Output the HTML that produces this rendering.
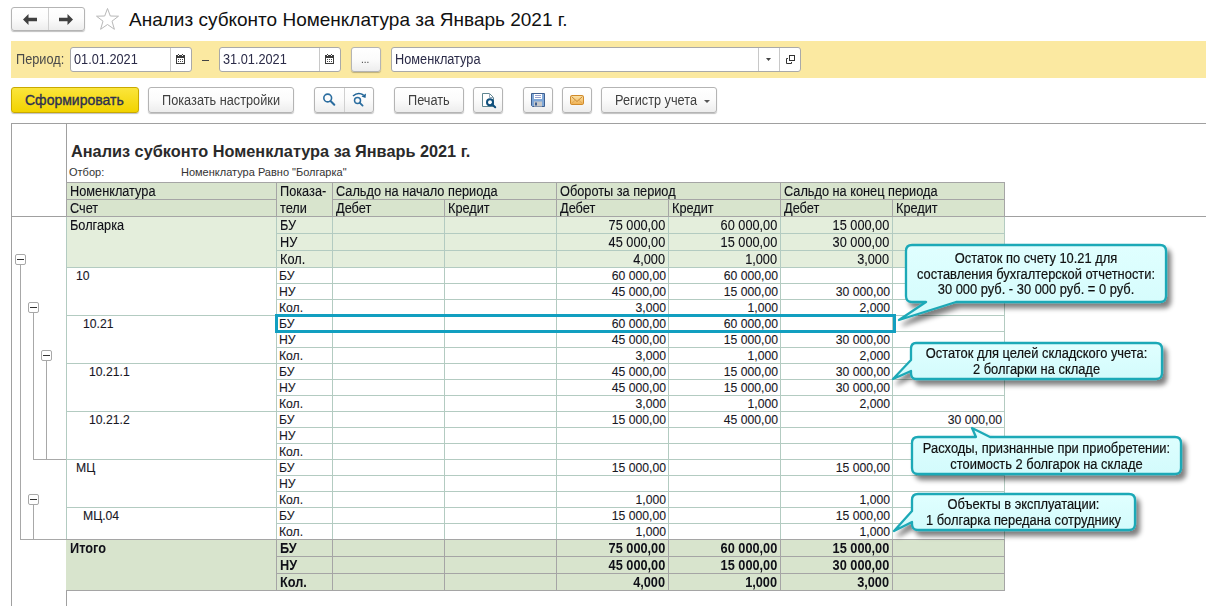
<!DOCTYPE html>
<html><head><meta charset="utf-8">
<style>
html,body{margin:0;padding:0;background:#fff;width:1206px;height:606px;overflow:hidden;position:relative;font-family:"Liberation Sans",sans-serif;}
.bx{position:absolute;}
.t{position:absolute;font-size:14px;line-height:14px;color:#101018;white-space:nowrap;-webkit-text-stroke:0.12px #101018;transform:scaleX(0.91);transform-origin:0 0;}
.tr{position:absolute;font-size:14px;line-height:14px;color:#101018;white-space:nowrap;-webkit-text-stroke:0.12px #101018;transform:scaleX(0.91);transform-origin:100% 0;}
.ts{position:absolute;font-size:12.2px;line-height:14px;color:#18181f;white-space:nowrap;-webkit-text-stroke:0.1px #18181f;}
.tsr{position:absolute;font-size:12.2px;line-height:14px;color:#18181f;white-space:nowrap;-webkit-text-stroke:0.1px #18181f;}
.tb{position:absolute;font-size:14px;line-height:14px;color:#101018;white-space:nowrap;font-weight:bold;transform:scaleX(0.91);transform-origin:0 0;}
.tbr{position:absolute;font-size:14px;line-height:14px;color:#101018;white-space:nowrap;font-weight:bold;transform:scaleX(0.91);transform-origin:100% 0;}
.btn{position:absolute;box-sizing:border-box;border:1px solid #b4b4b4;border-radius:3px;background:linear-gradient(#ffffff,#fbfbfb 50%,#ededed);box-shadow:0 1px 1px rgba(0,0,0,0.25);}
.lbl{position:absolute;font-size:14px;color:#404040;white-space:nowrap;line-height:14px;transform:scaleX(0.91);transform-origin:0 0;}
.inp{position:absolute;box-sizing:border-box;border:1px solid #a9a9a9;border-radius:3px;background:#fff;}
.tree{position:absolute;background:#a8a8a8;}
.tbx{position:absolute;box-sizing:border-box;width:11px;height:11px;border:1px solid #a8a8a8;border-radius:2px;background:#fff;}
.tbx:after{content:"";position:absolute;left:1px;top:4px;width:7px;height:1px;background:#333;}
.co{position:absolute;}
.cot{position:absolute;font-size:14px;line-height:15.6px;color:#111;-webkit-text-stroke:0.2px #111;text-align:center;white-space:nowrap;transform:scaleX(0.92);transform-origin:50% 0;}
</style></head><body>
<!-- nav buttons -->
<div class="btn" style="left:11px;top:7px;width:74px;height:24px;"></div>
<div class="bx" style="left:48px;top:8px;width:1px;height:22px;background:#d0d0d0"></div>
<svg class="bx" style="left:22px;top:13px" width="16" height="13" viewBox="0 0 16 13"><path d="M1 6.5 L6.5 1 V4.8 H15 V8.2 H6.5 V12 Z" fill="#404040"/></svg>
<svg class="bx" style="left:58px;top:13px" width="16" height="13" viewBox="0 0 16 13"><path d="M15 6.5 L9.5 1 V4.8 H1 V8.2 H9.5 V12 Z" fill="#404040"/></svg>
<svg class="bx" style="left:95px;top:7px" width="25" height="24" viewBox="0 0 25 24"><path d="M12.5 1.5 L15.3 9 L23.5 9.2 L17 14.2 L19.4 22.3 L12.5 17.5 L5.6 22.3 L8 14.2 L1.5 9.2 L9.7 9 Z" fill="none" stroke="#b8b8b8" stroke-width="1"/></svg>
<div class="bx" style="left:129px;top:9px;font-size:19px;line-height:22px;color:#111;white-space:nowrap">Анализ субконто Номенклатура за Январь 2021 г.</div>

<!-- yellow band -->
<div class="bx" style="left:11px;top:41px;width:1195px;height:37px;background:#fbe9a1"></div>
<div class="lbl" style="left:16px;top:52px;color:#4a4a4a">Период:</div>
<div class="inp" style="left:70px;top:47px;width:122px;height:25px;"></div>
<div class="bx" style="left:170px;top:48px;width:1px;height:23px;background:#c8c8c8"></div>
<div class="lbl" style="left:74px;top:52px;color:#2b2b48">01.01.2021</div>
<div class="inp" style="left:219px;top:47px;width:122px;height:25px;"></div>
<div class="bx" style="left:319px;top:48px;width:1px;height:23px;background:#c8c8c8"></div>
<div class="lbl" style="left:223px;top:52px;color:#2b2b48">31.01.2021</div>
<div class="bx" style="left:202px;top:60px;width:7px;height:1px;background:#444"></div>
<div class="btn" style="left:351px;top:47px;width:30px;height:25px;"></div>
<div class="lbl" style="left:361px;top:52px;font-size:11px">...</div>
<div class="inp" style="left:391px;top:47px;width:410px;height:25px;"></div>
<div class="bx" style="left:758px;top:48px;width:1px;height:23px;background:#c8c8c8"></div>
<div class="bx" style="left:779px;top:48px;width:1px;height:23px;background:#c8c8c8"></div>
<div class="lbl" style="left:395px;top:52px;color:#2b2b48">Номенклатура</div>



<svg class="bx" style="left:176px;top:54px" width="10" height="11" viewBox="0 0 10 11" shape-rendering="crispEdges"><g fill="#3c3c3c"><rect x="0" y="1" width="9" height="3"/><rect x="0" y="4" width="1" height="6"/><rect x="8" y="4" width="1" height="6"/><rect x="1" y="9" width="7" height="1"/><rect x="2" y="0" width="1" height="1"/><rect x="6" y="0" width="1" height="1"/></g><g fill="#fff"><rect x="2" y="1" width="1" height="1"/><rect x="6" y="1" width="1" height="1"/></g><g fill="#4a4a4a"><rect x="2" y="5" width="1" height="1"/><rect x="4" y="5" width="1" height="1"/><rect x="6" y="5" width="1" height="1"/><rect x="2" y="7" width="1" height="1"/><rect x="4" y="7" width="1" height="1"/><rect x="6" y="7" width="1" height="1"/></g></svg>
<svg class="bx" style="left:325px;top:54px" width="10" height="11" viewBox="0 0 10 11" shape-rendering="crispEdges"><g fill="#3c3c3c"><rect x="0" y="1" width="9" height="3"/><rect x="0" y="4" width="1" height="6"/><rect x="8" y="4" width="1" height="6"/><rect x="1" y="9" width="7" height="1"/><rect x="2" y="0" width="1" height="1"/><rect x="6" y="0" width="1" height="1"/></g><g fill="#fff"><rect x="2" y="1" width="1" height="1"/><rect x="6" y="1" width="1" height="1"/></g><g fill="#4a4a4a"><rect x="2" y="5" width="1" height="1"/><rect x="4" y="5" width="1" height="1"/><rect x="6" y="5" width="1" height="1"/><rect x="2" y="7" width="1" height="1"/><rect x="4" y="7" width="1" height="1"/><rect x="6" y="7" width="1" height="1"/></g></svg>
<svg class="bx" style="left:765px;top:57px" width="7" height="5" viewBox="0 0 7 5"><path d="M1 1 H6 L3.5 4 Z" fill="#444"/></svg>
<svg class="bx" style="left:785px;top:54px" width="12" height="11" viewBox="0 0 12 11"><rect x="4.5" y="1.5" width="5" height="5" fill="none" stroke="#333" stroke-width="1"/><path d="M3 4.5 H1.5 V9.5 H6.5 V8" fill="none" stroke="#333" stroke-width="1"/></svg>

<!-- toolbar -->
<div class="bx" style="left:11px;top:87px;width:128px;height:26px;box-sizing:border-box;border:1px solid #c9a900;border-radius:3px;background:linear-gradient(#fbe53c,#f2d300);box-shadow:0 1px 1px rgba(0,0,0,0.25)"></div>
<div class="lbl" style="left:25px;top:93px;color:#2d3050;-webkit-text-stroke:0.35px #2d3050;transform:none">Сформировать</div>
<div class="btn" style="left:148px;top:87px;width:146px;height:26px;"></div>
<div class="lbl" style="left:162px;top:93px;color:#404040">Показать настройки</div>
<div class="btn" style="left:314px;top:87px;width:60px;height:26px;"></div>
<div class="bx" style="left:344px;top:88px;width:1px;height:24px;background:#d0d0d0"></div>
<div class="btn" style="left:394px;top:87px;width:70px;height:26px;"></div>
<div class="lbl" style="left:408px;top:93px;color:#404040">Печать</div>
<div class="btn" style="left:473px;top:87px;width:30px;height:26px;"></div>
<div class="btn" style="left:523px;top:87px;width:30px;height:26px;"></div>
<div class="btn" style="left:562px;top:87px;width:30px;height:26px;"></div>
<div class="btn" style="left:601px;top:87px;width:116px;height:26px;"></div>
<div class="lbl" style="left:615px;top:93px;color:#404040">Регистр учета</div>



<svg class="bx" style="left:320px;top:91px" width="18" height="18" viewBox="0 0 18 18"><circle cx="7.7" cy="7" r="3.9" fill="none" stroke="#2b6d9f" stroke-width="1.6"/><path d="M10.5 10 L14.3 13.8" stroke="#2b6d9f" stroke-width="2" stroke-linecap="round"/></svg>
<svg class="bx" style="left:350px;top:91px" width="18" height="18" viewBox="0 0 18 18"><path d="M3 5 Q8 0.5 13.5 4" fill="none" stroke="#1f6396" stroke-width="1.6"/><path d="M11.5 5.5 L16 2.5 L15.5 7 Z" fill="#1f6396"/><circle cx="7.5" cy="9.5" r="3" fill="none" stroke="#2b6d9f" stroke-width="1.5"/><path d="M9.8 11.8 L12.6 14.6" stroke="#2b6d9f" stroke-width="1.8" stroke-linecap="round"/></svg>
<svg class="bx" style="left:480px;top:92px" width="18" height="17" viewBox="0 0 18 17"><path d="M2.5 1.5 H9.5 L13.5 5.5 V14.5 H2.5 Z" fill="#fff" stroke="#5f8590" stroke-width="1"/><path d="M9.5 1.5 V5.5 H13.5" fill="none" stroke="#9ab" stroke-width="1"/><circle cx="10" cy="10.2" r="3" fill="none" stroke="#0f4f7c" stroke-width="2"/><path d="M12 12.2 L15.2 15.2" stroke="#0f4f7c" stroke-width="2" stroke-linecap="round"/></svg>
<svg class="bx" style="left:531px;top:93px" width="14" height="14" viewBox="0 0 14 14"><path d="M0.5 0.5 H13.5 V13.5 H1.5 L0.5 12.5 Z" fill="#80a8d8" stroke="#3e5f90" stroke-width="1"/><rect x="3" y="1" width="8" height="5" fill="#fff"/><path d="M4 2.5 H10 M4 4.5 H10" stroke="#7a88c0" stroke-width="0.8"/><rect x="3" y="8.5" width="8" height="5" fill="#c8c8c8"/><rect x="4" y="9.5" width="2" height="3" fill="#3e5f90"/></svg>
<svg class="bx" style="left:570px;top:95px" width="14" height="10" viewBox="0 0 14 10"><defs><linearGradient id="mg" x1="0" y1="0" x2="0" y2="1"><stop offset="0" stop-color="#fbe2a8"/><stop offset="1" stop-color="#f0b050"/></linearGradient></defs><rect x="0.5" y="0.5" width="13" height="9" rx="1.2" fill="url(#mg)" stroke="#d08a2a" stroke-width="1"/><path d="M1.5 1.5 L7 6.5 L12.5 1.5" fill="none" stroke="#c98a34" stroke-width="1"/><path d="M1.5 8.5 L5.5 5 M12.5 8.5 L8.5 5" fill="none" stroke="#d9a050" stroke-width="0.8"/></svg>
<svg class="bx" style="left:703px;top:99px" width="8" height="5" viewBox="0 0 8 5"><path d="M1 1 H7 L4 4 Z" fill="#555"/></svg>

<!-- report frame -->
<div class="bx" style="left:11px;top:123px;width:1195px;height:1px;background:#a0a0a0"></div>
<div class="bx" style="left:11px;top:123px;width:1px;height:483px;background:#a0a0a0"></div>
<div class="bx" style="left:66px;top:123px;width:1px;height:483px;background:#a0a0a0"></div>
<div class="bx" style="left:11px;top:216px;width:1195px;height:1px;background:#a0a0a0"></div>

<div class="bx" style="left:71px;top:142px;font-size:16.3px;line-height:18px;font-weight:bold;color:#2a2a2a;white-space:nowrap">Анализ субконто Номенклатура за Январь 2021 г.</div>
<div class="bx" style="left:69px;top:166px;font-size:11px;line-height:12px;color:#333;white-space:nowrap">Отбор:</div>
<div class="bx" style="left:181px;top:166px;font-size:11px;line-height:12px;color:#333;white-space:nowrap">Номенклатура Равно "Болгарка"</div>

<div class="bx" style="left:66px;top:216px;width:938px;height:51px;background:#e4eedc"></div>
<div class="bx" style="left:66px;top:539px;width:938px;height:51px;background:#d8e4cd"></div>
<div class="bx" style="left:66px;top:182px;width:938px;height:34px;background:#d8e4cd"></div>
<div class="bx" style="left:276px;top:233px;width:729px;height:1px;background:#b3cbc1"></div>
<div class="bx" style="left:276px;top:250px;width:729px;height:1px;background:#b3cbc1"></div>
<div class="bx" style="left:66px;top:267px;width:939px;height:1px;background:#b3cbc1"></div>
<div class="bx" style="left:276px;top:283px;width:729px;height:1px;background:#b3cbc1"></div>
<div class="bx" style="left:276px;top:299px;width:729px;height:1px;background:#b3cbc1"></div>
<div class="bx" style="left:66px;top:315px;width:939px;height:1px;background:#b3cbc1"></div>
<div class="bx" style="left:276px;top:331px;width:729px;height:1px;background:#b3cbc1"></div>
<div class="bx" style="left:276px;top:347px;width:729px;height:1px;background:#b3cbc1"></div>
<div class="bx" style="left:66px;top:363px;width:939px;height:1px;background:#b3cbc1"></div>
<div class="bx" style="left:276px;top:379px;width:729px;height:1px;background:#b3cbc1"></div>
<div class="bx" style="left:276px;top:395px;width:729px;height:1px;background:#b3cbc1"></div>
<div class="bx" style="left:66px;top:411px;width:939px;height:1px;background:#b3cbc1"></div>
<div class="bx" style="left:276px;top:427px;width:729px;height:1px;background:#b3cbc1"></div>
<div class="bx" style="left:276px;top:443px;width:729px;height:1px;background:#b3cbc1"></div>
<div class="bx" style="left:66px;top:459px;width:939px;height:1px;background:#b3cbc1"></div>
<div class="bx" style="left:276px;top:475px;width:729px;height:1px;background:#b3cbc1"></div>
<div class="bx" style="left:276px;top:491px;width:729px;height:1px;background:#b3cbc1"></div>
<div class="bx" style="left:66px;top:507px;width:939px;height:1px;background:#b3cbc1"></div>
<div class="bx" style="left:276px;top:523px;width:729px;height:1px;background:#b3cbc1"></div>
<div class="bx" style="left:276px;top:216px;width:1px;height:324px;background:#b3cbc1"></div>
<div class="bx" style="left:332px;top:216px;width:1px;height:324px;background:#b3cbc1"></div>
<div class="bx" style="left:444px;top:216px;width:1px;height:324px;background:#b3cbc1"></div>
<div class="bx" style="left:556px;top:216px;width:1px;height:324px;background:#b3cbc1"></div>
<div class="bx" style="left:668px;top:216px;width:1px;height:324px;background:#b3cbc1"></div>
<div class="bx" style="left:780px;top:216px;width:1px;height:324px;background:#b3cbc1"></div>
<div class="bx" style="left:892px;top:216px;width:1px;height:324px;background:#b3cbc1"></div>
<div class="bx" style="left:1004px;top:216px;width:1px;height:324px;background:#b3cbc1"></div>
<div class="bx" style="left:66px;top:216px;width:1px;height:324px;background:#b3cbc1"></div>
<div class="bx" style="left:66px;top:539px;width:939px;height:1px;background:#a5a5a5"></div>
<div class="bx" style="left:276px;top:556px;width:729px;height:1px;background:#a5a5a5"></div>
<div class="bx" style="left:276px;top:573px;width:729px;height:1px;background:#a5a5a5"></div>
<div class="bx" style="left:66px;top:590px;width:939px;height:1px;background:#a5a5a5"></div>
<div class="bx" style="left:276px;top:539px;width:1px;height:52px;background:#a5a5a5"></div>
<div class="bx" style="left:332px;top:539px;width:1px;height:52px;background:#a5a5a5"></div>
<div class="bx" style="left:444px;top:539px;width:1px;height:52px;background:#a5a5a5"></div>
<div class="bx" style="left:556px;top:539px;width:1px;height:52px;background:#a5a5a5"></div>
<div class="bx" style="left:668px;top:539px;width:1px;height:52px;background:#a5a5a5"></div>
<div class="bx" style="left:780px;top:539px;width:1px;height:52px;background:#a5a5a5"></div>
<div class="bx" style="left:892px;top:539px;width:1px;height:52px;background:#a5a5a5"></div>
<div class="bx" style="left:1004px;top:539px;width:1px;height:52px;background:#a5a5a5"></div>
<div class="bx" style="left:66px;top:182px;width:939px;height:1px;background:#a5a5a5"></div>
<div class="bx" style="left:66px;top:216px;width:939px;height:1px;background:#a5a5a5"></div>
<div class="bx" style="left:66px;top:182px;width:1px;height:35px;background:#a5a5a5"></div>
<div class="bx" style="left:66px;top:199px;width:211px;height:1px;background:#a5a5a5"></div>
<div class="bx" style="left:332px;top:199px;width:673px;height:1px;background:#a5a5a5"></div>
<div class="bx" style="left:276px;top:182px;width:1px;height:35px;background:#a5a5a5"></div>
<div class="bx" style="left:332px;top:182px;width:1px;height:35px;background:#a5a5a5"></div>
<div class="bx" style="left:556px;top:182px;width:1px;height:35px;background:#a5a5a5"></div>
<div class="bx" style="left:780px;top:182px;width:1px;height:35px;background:#a5a5a5"></div>
<div class="bx" style="left:1004px;top:182px;width:1px;height:35px;background:#a5a5a5"></div>
<div class="bx" style="left:444px;top:199px;width:1px;height:18px;background:#a5a5a5"></div>
<div class="bx" style="left:668px;top:199px;width:1px;height:18px;background:#a5a5a5"></div>
<div class="bx" style="left:892px;top:199px;width:1px;height:18px;background:#a5a5a5"></div>
<div class="t" style="left:70px;top:184px;">Номенклатура</div>
<div class="t" style="left:70px;top:201px;">Счет</div>
<div class="t" style="left:280px;top:184px;">Показа-</div>
<div class="t" style="left:280px;top:201px;">тели</div>
<div class="t" style="left:336px;top:184px;">Сальдо на начало периода</div>
<div class="t" style="left:560px;top:184px;">Обороты за период</div>
<div class="t" style="left:784px;top:184px;">Сальдо на конец периода</div>
<div class="t" style="left:336px;top:201px;">Дебет</div>
<div class="t" style="left:448px;top:201px;">Кредит</div>
<div class="t" style="left:560px;top:201px;">Дебет</div>
<div class="t" style="left:672px;top:201px;">Кредит</div>
<div class="t" style="left:784px;top:201px;">Дебет</div>
<div class="t" style="left:896px;top:201px;">Кредит</div>
<div class="t" style="left:70px;top:218px;">Болгарка</div>
<div class="t" style="left:280px;top:218px;">БУ</div>
<div class="tr" style="right:541px;top:218px;">75 000,00</div>
<div class="tr" style="right:429px;top:218px;">60 000,00</div>
<div class="tr" style="right:317px;top:218px;">15 000,00</div>
<div class="t" style="left:280px;top:235px;">НУ</div>
<div class="tr" style="right:541px;top:235px;">45 000,00</div>
<div class="tr" style="right:429px;top:235px;">15 000,00</div>
<div class="tr" style="right:317px;top:235px;">30 000,00</div>
<div class="t" style="left:280px;top:252px;">Кол.</div>
<div class="tr" style="right:541px;top:252px;">4,000</div>
<div class="tr" style="right:429px;top:252px;">1,000</div>
<div class="tr" style="right:317px;top:252px;">3,000</div>
<div class="ts" style="left:76px;top:269px;">10</div>
<div class="ts" style="left:279px;top:269px;">БУ</div>
<div class="tsr" style="right:540px;top:269px;">60 000,00</div>
<div class="tsr" style="right:428px;top:269px;">60 000,00</div>
<div class="ts" style="left:279px;top:285px;">НУ</div>
<div class="tsr" style="right:540px;top:285px;">45 000,00</div>
<div class="tsr" style="right:428px;top:285px;">15 000,00</div>
<div class="tsr" style="right:316px;top:285px;">30 000,00</div>
<div class="ts" style="left:279px;top:301px;">Кол.</div>
<div class="tsr" style="right:540px;top:301px;">3,000</div>
<div class="tsr" style="right:428px;top:301px;">1,000</div>
<div class="tsr" style="right:316px;top:301px;">2,000</div>
<div class="ts" style="left:83px;top:317px;">10.21</div>
<div class="ts" style="left:279px;top:317px;">БУ</div>
<div class="tsr" style="right:540px;top:317px;">60 000,00</div>
<div class="tsr" style="right:428px;top:317px;">60 000,00</div>
<div class="ts" style="left:279px;top:333px;">НУ</div>
<div class="tsr" style="right:540px;top:333px;">45 000,00</div>
<div class="tsr" style="right:428px;top:333px;">15 000,00</div>
<div class="tsr" style="right:316px;top:333px;">30 000,00</div>
<div class="ts" style="left:279px;top:349px;">Кол.</div>
<div class="tsr" style="right:540px;top:349px;">3,000</div>
<div class="tsr" style="right:428px;top:349px;">1,000</div>
<div class="tsr" style="right:316px;top:349px;">2,000</div>
<div class="ts" style="left:89px;top:365px;">10.21.1</div>
<div class="ts" style="left:279px;top:365px;">БУ</div>
<div class="tsr" style="right:540px;top:365px;">45 000,00</div>
<div class="tsr" style="right:428px;top:365px;">15 000,00</div>
<div class="tsr" style="right:316px;top:365px;">30 000,00</div>
<div class="ts" style="left:279px;top:381px;">НУ</div>
<div class="tsr" style="right:540px;top:381px;">45 000,00</div>
<div class="tsr" style="right:428px;top:381px;">15 000,00</div>
<div class="tsr" style="right:316px;top:381px;">30 000,00</div>
<div class="ts" style="left:279px;top:397px;">Кол.</div>
<div class="tsr" style="right:540px;top:397px;">3,000</div>
<div class="tsr" style="right:428px;top:397px;">1,000</div>
<div class="tsr" style="right:316px;top:397px;">2,000</div>
<div class="ts" style="left:89px;top:413px;">10.21.2</div>
<div class="ts" style="left:279px;top:413px;">БУ</div>
<div class="tsr" style="right:540px;top:413px;">15 000,00</div>
<div class="tsr" style="right:428px;top:413px;">45 000,00</div>
<div class="tsr" style="right:204px;top:413px;">30 000,00</div>
<div class="ts" style="left:279px;top:429px;">НУ</div>
<div class="ts" style="left:279px;top:445px;">Кол.</div>
<div class="ts" style="left:76px;top:461px;">МЦ</div>
<div class="ts" style="left:279px;top:461px;">БУ</div>
<div class="tsr" style="right:540px;top:461px;">15 000,00</div>
<div class="tsr" style="right:316px;top:461px;">15 000,00</div>
<div class="ts" style="left:279px;top:477px;">НУ</div>
<div class="ts" style="left:279px;top:493px;">Кол.</div>
<div class="tsr" style="right:540px;top:493px;">1,000</div>
<div class="tsr" style="right:316px;top:493px;">1,000</div>
<div class="ts" style="left:83px;top:509px;">МЦ.04</div>
<div class="ts" style="left:279px;top:509px;">БУ</div>
<div class="tsr" style="right:540px;top:509px;">15 000,00</div>
<div class="tsr" style="right:316px;top:509px;">15 000,00</div>
<div class="ts" style="left:279px;top:525px;">Кол.</div>
<div class="tsr" style="right:540px;top:525px;">1,000</div>
<div class="tsr" style="right:316px;top:525px;">1,000</div>
<div class="tb" style="left:70px;top:541px;">Итого</div>
<div class="tb" style="left:280px;top:541px;">БУ</div>
<div class="tbr" style="right:541px;top:541px;">75 000,00</div>
<div class="tbr" style="right:429px;top:541px;">60 000,00</div>
<div class="tbr" style="right:317px;top:541px;">15 000,00</div>
<div class="tb" style="left:280px;top:558px;">НУ</div>
<div class="tbr" style="right:541px;top:558px;">45 000,00</div>
<div class="tbr" style="right:429px;top:558px;">15 000,00</div>
<div class="tbr" style="right:317px;top:558px;">30 000,00</div>
<div class="tb" style="left:280px;top:575px;">Кол.</div>
<div class="tbr" style="right:541px;top:575px;">4,000</div>
<div class="tbr" style="right:429px;top:575px;">1,000</div>
<div class="tbr" style="right:317px;top:575px;">3,000</div>

<!-- selection box -->
<div class="bx" style="left:275px;top:314px;width:621px;height:19px;box-sizing:border-box;border:3px solid #129fc0"></div>

<!-- tree -->
<div class="tree" style="left:20px;top:265px;width:1px;height:274px"></div>
<div class="tree" style="left:20px;top:539px;width:46px;height:1px"></div>
<div class="tree" style="left:33px;top:313px;width:1px;height:146px"></div>
<div class="tree" style="left:46px;top:361px;width:1px;height:98px"></div>
<div class="tree" style="left:33px;top:459px;width:33px;height:1px"></div>
<div class="tree" style="left:33px;top:505px;width:1px;height:34px"></div>
<div class="tbx" style="left:15px;top:254px"></div>
<div class="tbx" style="left:28px;top:302px"></div>
<div class="tbx" style="left:41px;top:350px"></div>
<div class="tbx" style="left:28px;top:494px"></div>



<svg class="bx" style="left:0;top:0" width="1206" height="606" viewBox="0 0 1206 606">
<defs>
<linearGradient id="cg" x1="0" y1="0" x2="0" y2="1"><stop offset="0" stop-color="#e0ffff"/><stop offset="1" stop-color="#d3fbfc"/></linearGradient>
<filter id="sh" x="-10%" y="-20%" width="130%" height="160%"><feGaussianBlur in="SourceAlpha" stdDeviation="2.8"/><feOffset dx="4" dy="5"/><feComponentTransfer><feFuncA type="linear" slope="0.5"/></feComponentTransfer><feMerge><feMergeNode/><feMergeNode in="SourceGraphic"/></feMerge></filter>
</defs>
<g filter="url(#sh)" fill="url(#cg)" stroke="#1fa9b7" stroke-width="2.3" stroke-linejoin="round">
<path d="M912 245 H1160 Q1166 245 1166 251 V296 Q1166 302 1160 302 H956 L899 320 L926 302 H912 Q906 302 906 296 V251 Q906 245 912 245 Z"/>
<path d="M916 343 H1156 Q1162 343 1162 349 V373 Q1162 379 1156 379 H916 Q911 379 911 373 V371 L893 379 L911 360 V349 Q911 343 916 343 Z"/>
<path d="M918 437 H976 L972 428 L990 437 H1175 Q1181 437 1181 443 V468 Q1181 474 1175 474 H918 Q912 474 912 468 V443 Q912 437 918 437 Z"/>
<path d="M918 494 H1129 Q1135 494 1135 500 V524 Q1135 530 1129 530 H918 Q912 530 912 524 V522 L894 531 L912 511 V500 Q912 494 918 494 Z"/>
</g>
</svg>
<div class="cot" style="left:906px;top:251px;width:260px">Остаток по счету 10.21 для<br>составления бухгалтерской отчетности:<br>30 000 руб. - 30 000 руб. = 0 руб.</div>
<div class="cot" style="left:911px;top:346px;width:251px">Остаток для целей складского учета:<br>2 болгарки на складе</div>
<div class="cot" style="left:912px;top:441px;width:269px">Расходы, признанные при приобретении:<br>стоимость 2 болгарок на складе</div>
<div class="cot" style="left:912px;top:497px;width:223px">Объекты в эксплуатации:<br>1 болгарка передана сотруднику</div>

</body></html>
